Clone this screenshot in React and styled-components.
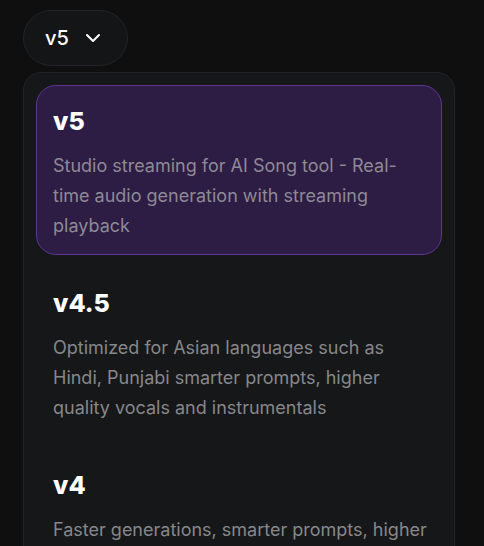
import React, { useState } from "react";
import styled, { createGlobalStyle } from "styled-components";

const Global = createGlobalStyle`
  html, body { margin: 0; padding: 0; background: #0f0f10; }
  body { font-family: Inter, "Noto Sans", sans-serif; color: #fff; overflow: hidden; }
  * { box-sizing: border-box; }
`;

const Page = styled.div`
  display: flex;
  flex-direction: column;
  align-items: flex-start;
  gap: 6px;
  padding: 10px 0 0 23px;
  min-height: 546px;
`;

const Trigger = styled.button`
  display: flex;
  align-items: center;
  gap: 12px;
  height: 56px;
  padding: 0 22px 0 21px;
  border-radius: 28px;
  background: #141517;
  border: 1px solid #232427;
  color: #fff;
  font-family: inherit;
  font-size: 20px;
  font-weight: 500;
  cursor: pointer;
`;

const Panel = styled.div`
  width: 432px;
  display: flex;
  flex-direction: column;
  gap: 12px;
  padding: 12px;
  background: #161719;
  border: 1px solid #222326;
  border-radius: 18px;
`;

const Item = styled.div`
  padding: 18px 10px 13px 16px;
  border-radius: 20px;
  border: 1px solid ${(p) => (p.$active ? "#5f3596" : "transparent")};
  background: ${(p) => (p.$active ? "#2d1c43" : "transparent")};
  cursor: pointer;
`;

const Title = styled.div`
  font-size: 25px;
  line-height: 34px;
  font-weight: 800;
  color: #fff;
  margin-bottom: 13px;
`;

const Desc = styled.div`
  font-size: 18px;
  line-height: 30px;
  color: ${(p) => (p.$active ? "#8e8a95" : "#86878a")};
`;

const models = [
  { id: "v5", desc: "Studio streaming for AI Song tool - Real-time audio generation with streaming playback" },
  { id: "v4.5", desc: "Optimized for Asian languages such as Hindi, Punjabi smarter prompts, higher quality vocals and instrumentals" },
  { id: "v4", desc: "Faster generations, smarter prompts, higher quality vocals and richer sound" },
];

const Chevron = () => (
  <svg width="24" height="24" viewBox="0 0 24 24" fill="none" stroke="#fff" strokeWidth="2" strokeLinecap="round" strokeLinejoin="round">
    <path d="m6 9 6 6 6-6" />
  </svg>
);

export default function App() {
  const [sel, setSel] = useState("v5");
  return (
    <>
      <Global />
      <Page>
        <Trigger>
          {sel}
          <Chevron />
        </Trigger>
        <Panel>
          {models.map((m) => (
            <Item key={m.id} $active={m.id === sel} onClick={() => setSel(m.id)}>
              <Title>{m.id}</Title>
              <Desc $active={m.id === sel}>{m.desc}</Desc>
            </Item>
          ))}
        </Panel>
      </Page>
    </>
  );
}
